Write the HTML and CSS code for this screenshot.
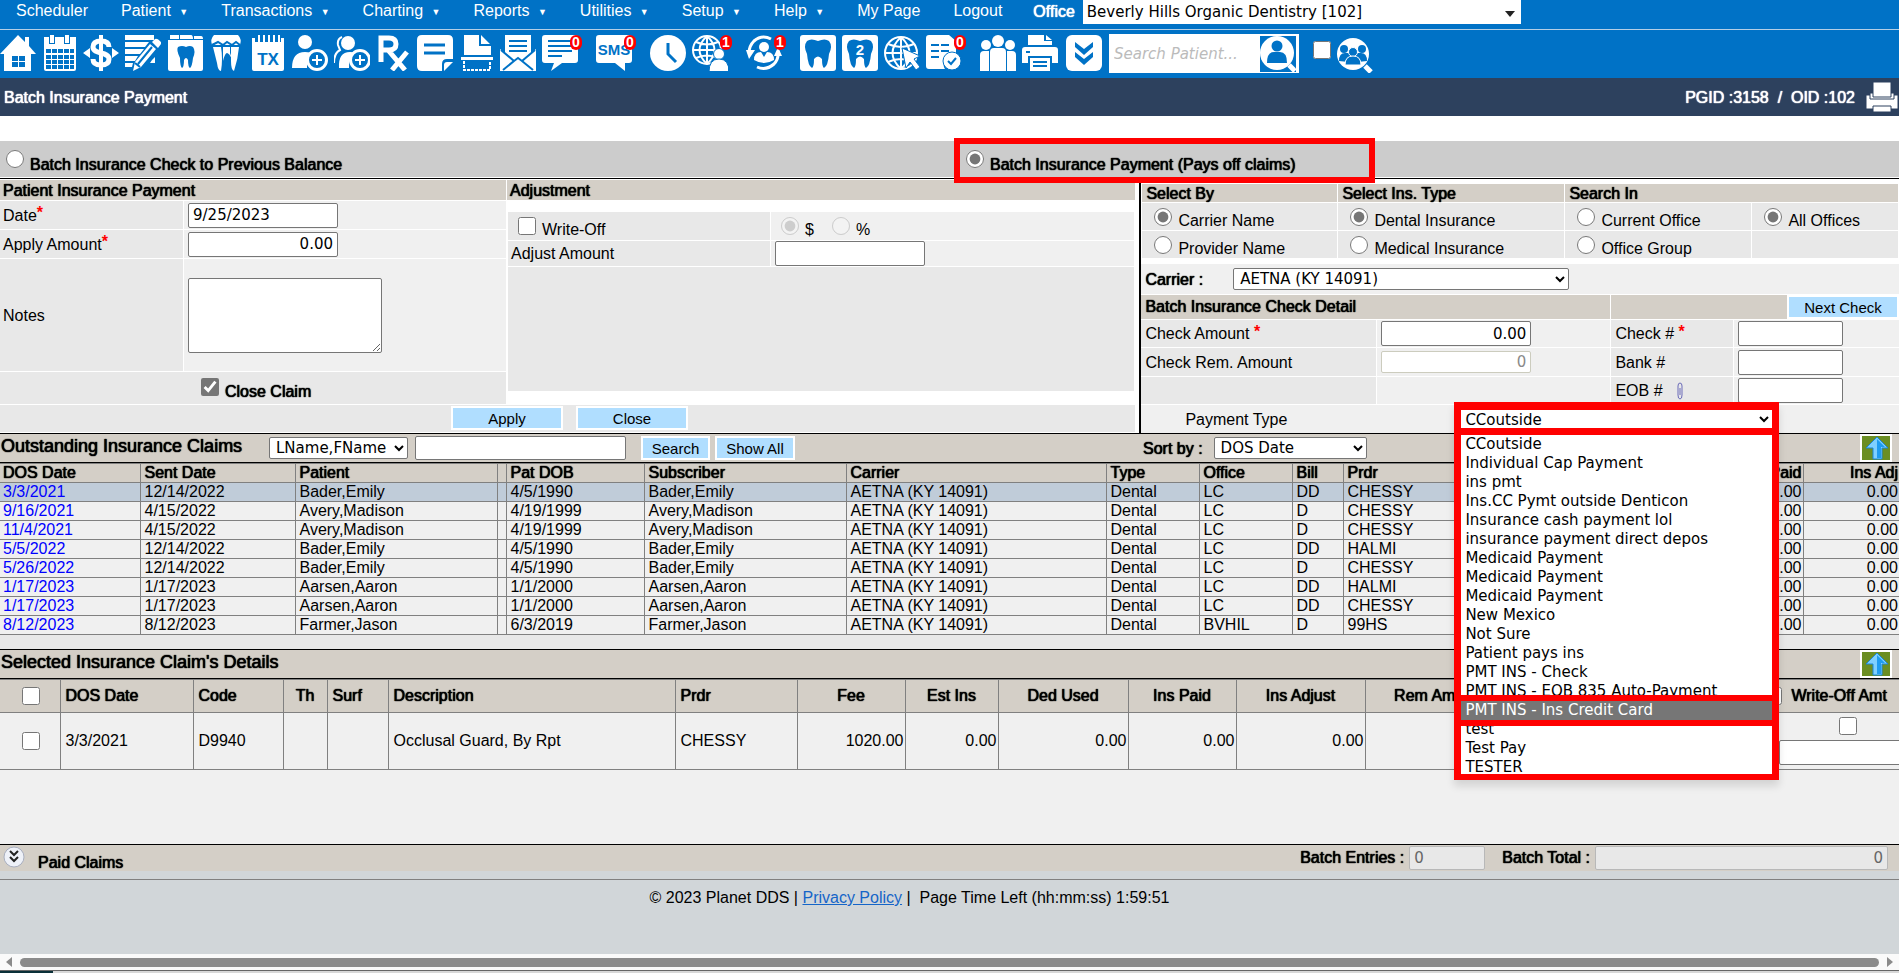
FILE: index.html
```html
<!DOCTYPE html>
<html lang="en">
<head>
  <meta charset="UTF-8" />
  <title>Batch Insurance Payment</title>
  <meta name="viewport" content="width=device-width, initial-scale=1.0"/>
  <link rel="stylesheet" href="styles.css">
</head>
<body>
  <header class="topbar">
    <nav class="menu">
      <a href="#">Scheduler</a>
      <a href="#">Patient <span class="caret">▼</span></a>
      <a href="#">Transactions <span class="caret">▼</span></a>
      <a href="#">Charting <span class="caret">▼</span></a>
      <a href="#">Reports <span class="caret">▼</span></a>
      <a href="#">Utilities <span class="caret">▼</span></a>
      <a href="#">Setup <span class="caret">▼</span></a>
      <a href="#">Help <span class="caret">▼</span></a>
      <a href="#">My Page</a>
      <a href="#">Logout</a>
      <div class="office">
        <label for="office" class="strong">Office</label>
        <div class="office-select">
          <select id="office"><option>Beverly Hills Organic Dentistry [102]</option></select>
        </div>
      </div>
    </nav>

    <div class="toolbar">
      <div class="tools tools-main">
        <a href="#" class="tool" aria-label="Home"><svg viewBox="0 0 36 36"><path d="M0 19L18 0l7 7V2h4v9l7 8h-5v17H4V19z"/><path class="b" d="M12 21h6v5h-6zM19 21h6v5h-6zM12 27h6v5h-6zM19 27h6v5h-6z"/></svg></a>
        <a href="#" class="tool" aria-label="Calendar"><svg viewBox="0 0 36 36"><path d="M2 2h5v7h6V2h9v7h6V2h6v10H2z"/><path d="M8 0h4v8H8zM23 0h4v8h-4z"/><path d="M2 12h32v22q0 2-2 2H4q-2 0-2-2z"/><path class="b" d="M4 14h5v4H4zM10 14h5v4h-5zM16 14h5v4h-5zM22 14h5v4h-5zM28 14h4v4h-4zM4 20h5v4H4zM10 20h5v4h-5zM16 20h5v4h-5zM22 20h5v4h-5zM28 20h4v4h-4zM4 25h5v4H4zM10 25h5v4h-5zM16 25h5v4h-5zM22 25h5v4h-5zM28 25h4v4h-4zM4 30h5v4H4zM10 30h5v4h-5zM16 30h5v4h-5zM22 30h5v4h-5zM28 30h4v4h-4z"/></svg></a>
        <a href="#" class="tool" aria-label="Payments"><svg viewBox="0 0 36 36"><path d="M0 18l7-5v10zM36 18l-7-5v10zM16 0h4v36h-4z"/><path class="l5" d="M26 12c0-4-3-6-8-6s-8 2-8 6 4 5 8 6 8 2 8 6-3 6-8 6-8-2-8-6"/></svg></a>
        <a href="#" class="tool" aria-label="Edit ledger"><svg viewBox="0 0 36 36"><path d="M0 0h29v5H0zM0 7h24l-4 5H0zM0 14h19l-4 5H0zM0 21h13l-3 5H0zM0 28h8l-1 4H0z"/><path d="M25 9l6 5L16 32l-8 4 2-9zM27 7l3-3q2-1 5 2 2 2 1 3l-3 4z"/><path class="bl" d="M27 12L13 29M10 28l5 4"/><path d="M27 25l3-3v6h-5z"/></svg></a>
        <a href="#" class="tool" aria-label="Tooth chart"><svg viewBox="0 0 36 36"><path d="M2 5h34v29q0 2-2 2H3q-2 0-2-2V5zM3 0h9v4H3zM13 0h11q2 0 2 4H13zM27 1h7q2 0 2 3h-9z"/><path class="b" d="M11 12q4-2 8 0 4-2 7 0 3 4 0 11-1 9-3 10-2-1-2-8-2-4-4 0 0 7-2 8-2-2-2-10-4-8-2-11z"/></svg></a>
        <a href="#" class="tool" aria-label="Perio"><svg viewBox="0 0 36 36"><path d="M6 0h24q4 4 2 10H4Q2 4 6 0z"/><path d="M5 12h8q2 12 0 24-3 0-4-8Q7 20 5 12zM15 12h7v6l2 6q-3-6-5-6t-4 8zM23 12h8q-1 12-5 24-3-1-3-10z"/><path class="bl" d="M4 10l6-3 5 3 4-3 5 3 4-3 4 3"/></svg></a>
        <a href="#" class="tool" aria-label="Treatment plan"><svg viewBox="0 0 36 36"><path d="M2 3h3v4h3V0h2v7h3V0h2v7h3V0h2v7h3V0h2v7h3V0h2v7h1V3h3v31q0 2-2 2H4q-2 0-2-2z"/><text class="bt" x="18" y="30" font-size="17" text-anchor="middle">TX</text></svg></a>
        <a href="#" class="tool" aria-label="Add patient"><svg viewBox="0 0 36 36"><circle cx="13" cy="7" r="7"/><path d="M0 33q0-16 13-16 6 0 8 2-7 4-6 14z"/><circle class="ring" cx="25" cy="25" r="9.500"/><path class="l2" d="M20 25h10M25 20v10"/></svg></a>
        <a href="#" class="tool" aria-label="Add family"><svg viewBox="0 0 36 36"><circle cx="14" cy="8" r="7"/><path d="M5 33q-1-16 11-16 4 0 6 1-8 5-7 15z"/><path class="l2" d="M8 2Q3 4 4 10l2 5Q0 18 0 28"/><circle class="ring" cx="26" cy="25" r="9.500"/><path class="l2" d="M21 25h10M26 20v10"/></svg></a>
        <a href="#" class="tool" aria-label="Prescriptions"><svg viewBox="0 0 36 36"><path class="l5" d="M6 27V3h8q7 0 7 6t-7 6H6M13 15l17 20M32 17L17 35"/></svg></a>
        <a href="#" class="tool" aria-label="Notes"><svg viewBox="0 0 36 36"><path d="M5 0h26q5 0 5 5v19h-6q-5 0-5 5v7H5q-5 0-5-5V5q0-5 5-5z"/><path d="M27 36v-6q0-3 3-3h6z"/><path class="bl3" d="M7 10h21M7 18h21"/></svg></a>
        <a href="#" class="tool" aria-label="Scan"><svg viewBox="0 0 36 36"><path d="M5 0h15v11h12v9H5zM22 0l9 9h-9zM2 22h32v3H2z"/><path class="dash" d="M5 26v9h26v-9"/></svg></a>
        <a href="#" class="tool" aria-label="Mail"><svg viewBox="0 0 36 36"><path d="M5 0h26v18l5-4v22H0V14l5 4z"/><path class="bl" d="M9 6h18M9 11h18M9 16h18M1 15l13 11L3 35M35 15L22 26l11 9M14 26l4-3 4 3"/></svg></a>
        <a href="#" class="tool" aria-label="Messages"><svg viewBox="0 0 36 36"><path d="M3 0h30q3 0 3 3v22q0 3-3 3H20L9 36l3-8H3q-3 0-3-3V3q0-3 3-3z"/><path class="bl" d="M6 6h24M6 11h24M6 16h24M6 21h14"/></svg><span class="badge">0</span></a>
      </div>
      <div class="tools">
        <a href="#" class="tool" aria-label="SMS"><svg viewBox="0 0 36 36"><path d="M3 0h30q3 0 3 3v22q0 3-3 3h-4v8l-10-8H3q-3 0-3-3V3q0-3 3-3z"/><text class="bt" x="18" y="20" font-size="15" text-anchor="middle">SMS</text></svg><span class="badge">0</span></a>
      </div>
      <div class="tools">
        <a href="#" class="tool" aria-label="Time clock"><svg viewBox="0 0 36 36"><circle cx="18" cy="18" r="18"/><path class="bl3" d="M18 8v11l8 8"/></svg></a>
        <a href="#" class="tool" aria-label="Portal users"><svg viewBox="0 0 36 36"><circle class="g" cx="15" cy="15" r="14"/><path class="g" d="M15 1v28M1 15h28M4 7q11 5 22 0M4 23q11-5 22 0M15 1q-15 14 0 28M15 1q15 14 0 28"/><circle class="edge" cx="27" cy="19" r="5.500"/><path class="edge" d="M17 37q0-13 10-13t10 13z"/></svg><span class="badge">1</span></a>
      </div>
      <div class="tools">
        <a href="#" class="tool" aria-label="Recall"><svg viewBox="0 0 36 36"><path class="l3" d="M25 4Q16-1 8 6q-5 5-5 12M11 32q9 4 17-3 5-5 4-13"/><path d="M0 15h9l-6 9zM28 21h8l-4-9z"/><circle cx="18" cy="12" r="5"/><path d="M8 25q0-8 7-8l3 5 3-5q7 0 7 8-10 6-20 0z"/></svg><span class="badge">1</span></a>
      </div>
      <div class="tools">
        <a href="#" class="tool" aria-label="Tooth"><svg viewBox="0 0 36 36"><rect width="36" height="36" rx="3"/><path class="b" d="M7 6q4-3 11 0 7-3 11 0 4 5 0 13-1 12-5 14-2-1-2-9-4-5-8 0 0 8-2 9-4-2-5-14-4-8 0-13z"/></svg></a>
        <a href="#" class="tool" aria-label="Tooth 2"><svg viewBox="0 0 36 36"><rect width="36" height="36" rx="3"/><path class="b" d="M7 6q4-3 11 0 7-3 11 0 4 5 0 13-1 12-5 14-2-1-2-9-4-5-8 0 0 8-2 9-4-2-5-14-4-8 0-13z"/><text class="wt" x="18" y="20" font-size="15" text-anchor="middle">2</text></svg></a>
        <a href="#" class="tool" aria-label="Web"><svg viewBox="0 0 36 36"><circle class="g" cx="17" cy="18" r="16"/><path class="g" d="M17 2v32M1 18h32M4 9q13 6 26 0M4 27q13-6 26 0M17 2q-17 16 0 32M17 2q17 16 0 32"/><path class="edge" d="M18 13l18 8-6 3 6 8-4 3-6-8-4 6z"/></svg></a>
        <a href="#" class="tool" aria-label="Claims"><svg viewBox="0 0 36 36"><path d="M3 0h20l7 6v13q-9-1-12 7-1 5 1 8H3q-3 0-3-3V3q0-3 3-3z"/><path class="bl" d="M5 10h8M15 10h8M5 16h8M15 16h8M5 22h8"/><circle class="edge" cx="26" cy="26" r="9"/><path class="bl" d="M22 26l3 3 5-6"/></svg><span class="badge">0</span></a>
      </div>
      <div class="tools">
        <a href="#" class="tool" aria-label="Patients"><svg viewBox="0 0 36 36"><circle cx="18" cy="6" r="6"/><circle cx="6" cy="10" r="5"/><circle cx="30" cy="10" r="5"/><path d="M10 36V17q0-4 4-4h8q4 0 4 4v19zM0 36V20q0-4 4-4h5v20zM36 36V20q0-4-4-4h-5v20z"/></svg></a>
        <a href="#" class="tool" aria-label="Print"><svg viewBox="0 0 36 36"><path d="M6 10V0h16v6h8v4zM24 0l6 5h-6zM3 12h30q3 0 3 3v13h-6v-7H6v7H0V15q0-3 3-3z"/><path d="M8 23h20v13H8z"/><path class="bl" d="M11 27h14M11 31h14"/><path class="b" d="M4 16h4v2H4z"/></svg></a>
      </div>
      <div class="search-row">
        <a href="#" class="tool" aria-label="More"><svg viewBox="0 0 36 36"><rect width="36" height="36" rx="6"/><path class="b" d="M9 7l9 7 9-7v5l-9 8-9-8zM9 17l9 7 9-7v5l-9 8-9-8z"/></svg></a>
        <div class="search">
          <input type="text" placeholder="Search Patient..." aria-label="Search Patient">
          <button type="button" class="search-btn" aria-label="Search"><svg viewBox="0 0 36 36"><circle cx="17" cy="17" r="17"/><circle class="b" cx="17" cy="10" r="5.500"/><path class="b" d="M7 27q0-11 7-11h6q7 0 7 11z"/><path class="l5" d="M29 29l6 6"/></svg></button>
        </div>
      </div>
      <div class="group-search">
        <input type="checkbox" class="box" aria-label="Search all offices">
        <a href="#" class="tool" aria-label="Search family"><svg viewBox="0 0 36 36"><circle cx="16" cy="17" r="16"/><path class="l5" d="M28 29l6 6"/><circle class="b" cx="7" cy="12" r="4"/><circle class="b" cx="25" cy="12" r="4"/><path class="b" d="M2 24q0-8 6-8h16q6 0 6 8-14 2-28 0z"/><circle class="wb" cx="16" cy="15" r="4.500"/><path class="wb" d="M8 28q0-9 8-9t8 9z"/></svg></a>
      </div>
    </div>
  </header>

  <div class="titlebar">
    <h1 class="strong">Batch Insurance Payment</h1>
    <span class="strong ids">PGID :3158&nbsp; /&nbsp; OID :102</span>
    <button type="button" class="print" aria-label="Print"><svg viewBox="0 0 34 32"><path d="M1 14h32v14H1z"/><path d="M5 12h24v6H5z"/><path d="M8 1h18v15H8zM8 25h18v6H8z"/></svg></button>
  </div>

  <main>
    <div class="modes">
      <label class="mode strong"><input type="radio" name="mode" class="box">Batch Insurance Check to Previous Balance</label>
      <label class="mode mode-marked strong"><input type="radio" name="mode" class="box" checked>Batch Insurance Payment (Pays off claims)</label>
    </div>

    <div class="entry">
      <section class="entry-left">
        <div class="payment">
          <h2 class="head strong">Patient Insurance Payment</h2>
          <label for="date" class="cell">Date<b class="req">*</b></label>
          <div class="cell light"><input type="text" id="date" class="field w150" value="9/25/2023"></div>
          <label for="apply" class="cell">Apply Amount<b class="req">*</b></label>
          <div class="cell light"><input type="text" id="apply" class="field w150 num" value="0.00"></div>
          <label for="notes" class="cell">Notes</label>
          <div class="cell light"><textarea id="notes" class="field notes"></textarea></div>
          <label class="cell close-claim strong"><input type="checkbox" class="box" checked>Close Claim</label>
        </div>
        <div class="adjust">
          <h2 class="head strong">Adjustment</h2>
          <div class="adjust-body">
            <label class="cell opt"><input type="checkbox" class="box">Write-Off</label>
            <div class="cell light opt">
              <label><input type="radio" name="unit" class="box" checked disabled>$</label>
              <label><input type="radio" name="unit" class="box" disabled>%</label>
            </div>
            <label for="adjamt" class="cell">Adjust Amount</label>
            <div class="cell light"><input type="text" id="adjamt" class="field w150"></div>
            <div class="cell filler"></div>
          </div>
        </div>
        <div class="actions">
          <button type="button" class="btn btn-wide">Apply</button>
          <button type="button" class="btn btn-wide">Close</button>
        </div>
      </section>

      <section class="entry-right">
        <div class="filters">
          <h2 class="head strong">Select By</h2>
          <h2 class="head strong">Select Ins. Type</h2>
          <h2 class="head strong span2">Search In</h2>
          <label class="cell opt"><input type="radio" name="by" class="box" checked>Carrier Name</label>
          <label class="cell opt"><input type="radio" name="type" class="box" checked>Dental Insurance</label>
          <label class="cell opt"><input type="radio" name="in" class="box">Current Office</label>
          <label class="cell opt"><input type="radio" name="in" class="box" checked>All Offices</label>
          <label class="cell opt"><input type="radio" name="by" class="box">Provider Name</label>
          <label class="cell opt"><input type="radio" name="type" class="box">Medical Insurance</label>
          <label class="cell opt"><input type="radio" name="in" class="box">Office Group</label>
          <div class="cell"></div>
        </div>
        <div class="carrier">
          <label for="carrier" class="strong">Carrier :</label>
          <select id="carrier" class="pick"><option>AETNA (KY 14091)</option></select>
        </div>
        <div class="detail">
          <h2 class="head strong span2">Batch Insurance Check Detail</h2>
          <div class="head next span2"><button type="button" class="btn btn-next">Next Check</button></div>
          <label for="chkamt" class="cell">Check Amount <b class="req">*</b></label>
          <div class="cell light"><input type="text" id="chkamt" class="field w150 num" value="0.00"></div>
          <label for="chkno" class="cell">Check # <b class="req">*</b></label>
          <div class="cell light"><input type="text" id="chkno" class="field w105"></div>
          <label for="rem" class="cell">Check Rem. Amount</label>
          <div class="cell light"><input type="text" id="rem" class="field w150 num off" value="0" disabled></div>
          <label for="bank" class="cell">Bank #</label>
          <div class="cell light"><input type="text" id="bank" class="field w105"></div>
          <div class="cell"></div>
          <div class="cell light"></div>
          <label for="eob" class="cell">EOB # <svg class="clip" viewBox="0 0 8 18"><path d="M2 4v9q0 4 2 4t2-4V4q0-3-2-3T2 4m2 2v7"/></svg></label>
          <div class="cell light"><input type="text" id="eob" class="field w105"></div>
        </div>
        <div class="paytype">
          <label for="ptype">Payment Type</label>
          <div class="pay-anchor">
            <div class="pay-menu">
              <select id="ptype"><option>CCoutside</option></select>
              <ul class="pay-list">
                <li>CCoutside</li>
                <li>Individual Cap Payment</li>
                <li>ins pmt</li>
                <li>Ins.CC Pymt outside Denticon</li>
                <li>Insurance cash payment lol</li>
                <li>insurance payment direct depos</li>
                <li>Medicaid Payment</li>
                <li>Medicaid Payment</li>
                <li>Medicaid Payment</li>
                <li>New Mexico</li>
                <li>Not Sure</li>
                <li>Patient pays ins</li>
                <li>PMT INS - Check</li>
                <li>PMT INS - EOB 835 Auto-Payment</li>
                <li class="active">PMT INS - Ins Credit Card</li>
                <li>test</li>
                <li>Test Pay</li>
                <li>TESTER</li>
              </ul>
            </div>
          </div>
        </div>
      </section>
    </div>

    <section class="claims">
      <div class="bar">
        <h2 class="strong bar-title">Outstanding Insurance Claims</h2>
        <select class="pick name-pick" aria-label="Search field"><option>LName,FName</option></select>
        <input type="text" class="field name-field" aria-label="Search text">
        <button type="button" class="btn btn-search">Search</button>
        <button type="button" class="btn btn-show">Show All</button>
        <div class="sort">
          <label for="sort" class="strong">Sort by :</label>
          <select id="sort" class="pick sort-pick"><option>DOS Date</option></select>
        </div>
        <button type="button" class="up" aria-label="Collapse"><svg viewBox="0 0 28 24"><use href="#up"/></svg></button>
      </div>
      <table class="grid">
        <colgroup>
          <col class="c140"><col class="c155"><col class="c202"><col class="c9"><col class="c138"><col class="c202"><col class="c260"><col class="c93"><col class="c93"><col class="c51"><col><col class="c104"><col class="c96">
        </colgroup>
        <thead>
          <tr><th>DOS Date</th><th>Sent Date</th><th>Patient</th><th></th><th>Pat DOB</th><th>Subscriber</th><th>Carrier</th><th>Type</th><th>Office</th><th>Bill</th><th>Prdr</th><th class="r">Ins Paid</th><th class="r">Ins Adj</th></tr>
        </thead>
        <tbody>
          <tr class="picked"><td><a href="#">3/3/2021</a></td><td>12/14/2022</td><td>Bader,Emily</td><td></td><td>4/5/1990</td><td>Bader,Emily</td><td>AETNA (KY 14091)</td><td>Dental</td><td>LC</td><td>DD</td><td>CHESSY</td><td class="r">0.00</td><td class="r">0.00</td></tr>
          <tr><td><a href="#">9/16/2021</a></td><td>4/15/2022</td><td>Avery,Madison</td><td></td><td>4/19/1999</td><td>Avery,Madison</td><td>AETNA (KY 14091)</td><td>Dental</td><td>LC</td><td>D</td><td>CHESSY</td><td class="r">0.00</td><td class="r">0.00</td></tr>
          <tr><td><a href="#">11/4/2021</a></td><td>4/15/2022</td><td>Avery,Madison</td><td></td><td>4/19/1999</td><td>Avery,Madison</td><td>AETNA (KY 14091)</td><td>Dental</td><td>LC</td><td>D</td><td>CHESSY</td><td class="r">0.00</td><td class="r">0.00</td></tr>
          <tr><td><a href="#">5/5/2022</a></td><td>12/14/2022</td><td>Bader,Emily</td><td></td><td>4/5/1990</td><td>Bader,Emily</td><td>AETNA (KY 14091)</td><td>Dental</td><td>LC</td><td>DD</td><td>HALMI</td><td class="r">0.00</td><td class="r">0.00</td></tr>
          <tr><td><a href="#">5/26/2022</a></td><td>12/14/2022</td><td>Bader,Emily</td><td></td><td>4/5/1990</td><td>Bader,Emily</td><td>AETNA (KY 14091)</td><td>Dental</td><td>LC</td><td>D</td><td>CHESSY</td><td class="r">0.00</td><td class="r">0.00</td></tr>
          <tr><td><a href="#">1/17/2023</a></td><td>1/17/2023</td><td>Aarsen,Aaron</td><td></td><td>1/1/2000</td><td>Aarsen,Aaron</td><td>AETNA (KY 14091)</td><td>Dental</td><td>LC</td><td>DD</td><td>HALMI</td><td class="r">0.00</td><td class="r">0.00</td></tr>
          <tr><td><a href="#">1/17/2023</a></td><td>1/17/2023</td><td>Aarsen,Aaron</td><td></td><td>1/1/2000</td><td>Aarsen,Aaron</td><td>AETNA (KY 14091)</td><td>Dental</td><td>LC</td><td>DD</td><td>CHESSY</td><td class="r">0.00</td><td class="r">0.00</td></tr>
          <tr><td><a href="#">8/12/2023</a></td><td>8/12/2023</td><td>Farmer,Jason</td><td></td><td>6/3/2019</td><td>Farmer,Jason</td><td>AETNA (KY 14091)</td><td>Dental</td><td>BVHIL</td><td>D</td><td>99HS</td><td class="r">0.00</td><td class="r">0.00</td></tr>
        </tbody>
      </table>
    </section>

    <section class="selected">
      <div class="bar">
        <h2 class="strong bar-title">Selected Insurance Claim's Details</h2>
        <button type="button" class="up" aria-label="Collapse"><svg viewBox="0 0 28 24"><g id="up"><path fill="#7fd0ff" stroke="#1b86d8" d="M15 1l11 11h-6v11h-9V12H4z"/><path fill="#1f9cf0" d="M15 3l8 8h-4v11h-4z"/></g></svg></button>
      </div>
      <table class="grid lines">
        <colgroup>
          <col class="c60"><col class="c133"><col class="c90"><col class="c44"><col class="c61"><col class="c287"><col class="c122"><col class="c108"><col class="c93"><col class="c130"><col class="c108"><col class="c129"><col class="c124"><col><col class="c178">
        </colgroup>
        <thead>
          <tr><th class="c"><input type="checkbox" class="box" aria-label="Select all"></th><th>DOS Date</th><th>Code</th><th class="c">Th</th><th>Surf</th><th>Description</th><th>Prdr</th><th class="c">Fee</th><th class="c">Est Ins</th><th class="c">Ded Used</th><th class="c">Ins Paid</th><th class="c">Ins Adjust</th><th class="c">Rem Amt</th><th></th><th><label class="wo"><input type="checkbox" class="box">Write-Off Amt</label></th></tr>
        </thead>
        <tbody>
          <tr><td class="c"><input type="checkbox" class="box" aria-label="Select claim"></td><td>3/3/2021</td><td>D9940</td><td></td><td></td><td>Occlusal Guard, By Rpt</td><td>CHESSY</td><td class="r">1020.00</td><td class="r">0.00</td><td class="r">0.00</td><td class="r">0.00</td><td class="r">0.00</td><td></td><td></td><td class="c wo-cell"><input type="checkbox" class="box" aria-label="Write off"><input type="text" class="field" aria-label="Write-off amount"></td></tr>
        </tbody>
      </table>
    </section>

    <section class="paid">
      <button type="button" class="expand" aria-label="Expand"><svg viewBox="0 0 22 22"><circle cx="11" cy="11" r="10" fill="#eef1f8" stroke="#a9afc0"/><path fill="none" stroke="#222" stroke-width="2" d="M7 5l4 4 4-4M7 11l4 4 4-4"/></svg></button>
      <span class="strong paid-title">Paid Claims</span>
      <label class="strong" for="entries">Batch Entries :</label>
      <input type="text" id="entries" class="field entries" value="0" disabled>
      <label class="strong total-label" for="total">Batch Total :</label>
      <input type="text" id="total" class="field num total" value="0" disabled>
    </section>
  </main>

  <footer class="foot">© 2023 Planet DDS | <a href="#">Privacy Policy</a> |&nbsp; Page Time Left (hh:mm:ss) 1:59:51</footer>

  <div class="scroll">
    <svg class="tip" viewBox="0 0 6 10"><path d="M6 0v10L0 5z"/></svg>
    <div class="thumb"></div>
    <svg class="tip" viewBox="0 0 6 10"><path d="M0 0v10l6-5z"/></svg>
  </div>
  <div class="edge-strip"></div>
</body>
</html>
```
FILE: styles.css
```css
* {
  box-sizing: border-box;
}
body {
  margin: 0;
  min-height: 100vh;
  display: flex;
  flex-direction: column;
  overflow: hidden;
  background: #fff;
  color: #000;
  font-family: "Liberation Sans", Arial, sans-serif;
  font-size: 16px;
  line-height: 19px;
}
h1, h2 {
  margin: 0;
  font-size: 16px;
  font-weight: normal;
}
input, select, textarea, button {
  margin: 0;
  font-family: "DejaVu Sans", Verdana, sans-serif;
  font-size: 15px;
}
.strong, th {
  font-weight: normal;
  text-shadow: 0 0 1px currentColor, 0 0 1px currentColor;
}
.box {
  flex: none;
  width: 18px;
  height: 18px;
  accent-color: #767676;
}

/* Top menu */
.topbar {
  background: #0072c6;
  color: #fff;
}
.menu {
  display: flex;
  gap: 33px;
  height: 30px;
  padding-left: 16px;
  border-bottom: 1px solid #b4cfe6;
  line-height: 21px;
}
.menu > a {
  color: #fff;
  text-decoration: none;
  white-space: nowrap;
}
.caret {
  margin-left: 4px;
  font-size: 9px;
  vertical-align: 1px;
}
.office {
  display: flex;
  gap: 8px;
  margin-left: -2px;
  line-height: 23px;
}
.office-select {
  position: relative;
  width: 438px;
}
.office-select select {
  appearance: none;
  width: 100%;
  height: 24px;
  padding: 0 4px;
  border: 0;
  background: #fff;
}
.office-select::after {
  content: "";
  position: absolute;
  top: 11px;
  right: 6px;
  border: 5px solid transparent;
  border-top: 6px solid #222;
  border-bottom: 0;
}

/* Icon toolbar */
.toolbar {
  display: flex;
  gap: 18px;
  height: 48px;
  padding-top: 5px;
}
.tools {
  display: flex;
  gap: 6px;
}
.tools-main {
  gap: 0;
  width: 578px;
  justify-content: space-between;
}
.tool {
  position: relative;
  display: block;
  width: 36px;
  height: 36px;
}
.tool svg, .search-btn svg {
  display: block;
  width: 36px;
  height: 36px;
  fill: #fff;
}
svg .b {
  fill: #0072c6;
}
svg .wb {
  fill: #0072c6;
  stroke: #fff;
}
svg .bl, svg .bl3 {
  fill: none;
  stroke: #0072c6;
  stroke-width: 2;
}
svg .bl3 {
  stroke-width: 3;
}
svg .l2, svg .l3, svg .l5, svg .g, svg .dash {
  fill: none;
  stroke: #fff;
  stroke-width: 2;
}
svg .l3 {
  stroke-width: 3;
}
svg .l5 {
  stroke-width: 5;
}
svg .dash {
  stroke-dasharray: 3 1;
}
svg .ring {
  fill: #0072c6;
  stroke: #fff;
  stroke-width: 3;
}
svg .edge {
  fill: #fff;
  stroke: #0072c6;
  stroke-width: 1;
}
svg .bt, svg .wt {
  fill: #0072c6;
  font-weight: bold;
}
svg .wt {
  fill: #fff;
}
.badge {
  position: absolute;
  top: 0;
  right: -4px;
  width: 12px;
  height: 15px;
  border-radius: 6px;
  background: #f00;
  color: #fff;
  font-size: 14px;
  font-weight: bold;
  line-height: 15px;
  text-align: center;
}
.search-row {
  display: flex;
  gap: 7px;
  margin-left: -10px;
}
.search {
  display: flex;
  align-items: center;
  width: 190px;
  height: 39px;
  margin-top: -1px;
  padding-right: 3px;
  background: #fff;
}
.search input {
  flex: 1;
  min-width: 0;
  padding: 0 5px;
  border: 0;
  outline: 0;
}
.search input::placeholder {
  color: #bbb;
  font-style: italic;
}
.search-btn {
  padding: 0;
  border: 0;
  background: #0072c6;
}
.group-search {
  display: flex;
  gap: 6px;
  margin-left: -4px;
  padding-top: 2px;
}
.group-search .box {
  margin-top: 4px;
}

/* Page title */
.titlebar {
  display: flex;
  align-items: center;
  height: 38px;
  padding-left: 4px;
  background: #2d415e;
  color: #fff;
}
.ids {
  margin-left: auto;
  margin-right: 10px;
}
.print {
  width: 34px;
  height: 32px;
  padding: 0;
  border: 0;
  background: none;
}
.print svg {
  display: block;
  fill: #fff;
  stroke: #2d415e;
}

/* Payment mode */
.modes {
  display: grid;
  grid-template-columns: 954fr 945fr;
  height: 36px;
  margin-top: 25px;
  background: #ccc;
}
.mode {
  display: flex;
  gap: 6px;
  padding: 9px 0 0 6px;
  line-height: 29px;
}
.mode-marked {
  width: 421px;
  height: 45px;
  margin-top: -3px;
  padding: 6px 0 0 6px;
  border: 6px solid #f00;
  position: relative;
}

/* Entry forms */
.entry {
  display: grid;
  grid-template-columns: 3fr 2fr;
  margin-top: 1px;
  border-top: 1px solid #000;
  border-bottom: 1px solid #000;
}
.head {
  padding-left: 3px;
  background: #d4cfc7;
}
.cell {
  display: flex;
  align-items: center;
  padding-left: 3px;
  background: #e8e8e8;
  white-space: pre;
}
.light {
  padding-left: 4px;
  background: #f0f0f0;
}
.req {
  color: #f00;
  align-self: flex-start;
  padding-top: 2px;
}
.field {
  height: 25px;
  padding: 2px 4px;
  border: 1px solid #767676;
  border-radius: 2px;
  background: #fff;
}
.num {
  text-align: right;
}
.w150 {
  width: 150px;
}
.w105 {
  width: 105px;
}
.off {
  height: 22px;
  border-color: #ccccbe;
  color: #8a8a8a;
}
.opt {
  align-items: flex-start;
  gap: 6px;
  padding: 5px 0 0 12px;
  line-height: 26px;
}
.opt label {
  display: flex;
  gap: 6px;
  margin-right: 12px;
}
.entry-left {
  display: grid;
  grid-template-columns: 506px 1fr;
  gap: 1px;
  padding: 1px 4px 1px 0;
}
.payment {
  display: grid;
  grid-template-columns: 183px 1fr;
  grid-template-rows: 20px 28px 28px 112px 32px;
  gap: 1px;
}
.payment .head, .adjust .head {
  line-height: 21px;
}
.payment .head, .close-claim {
  grid-column: 1 / -1;
}
.notes {
  width: 194px;
  height: 75px;
}
.close-claim {
  align-items: flex-start;
  gap: 6px;
  padding: 6px 0 0 201px;
  line-height: 28px;
}
.adjust-body {
  display: grid;
  grid-template-columns: 262px 1fr;
  grid-template-rows: 28px 25px 124px;
  gap: 1px;
  margin: 12px 1px 0;
}
.filler {
  grid-column: 1 / -1;
}
.adjust .head {
  height: 20px;
}
.adjust .opt {
  padding-left: 10px;
}
.actions {
  grid-column: 1 / -1;
  display: flex;
  gap: 13px;
  height: 27px;
  padding: 1px 0 0 451px;
  background: #e8e8e8;
}
.btn {
  height: 24px;
  padding: 0;
  border: 2px solid #fff;
  background: #b0deff;
  font-family: inherit;
}
.btn-wide {
  width: 112px;
}
.entry-right {
  border-left: 2px solid #000;
}
.filters {
  display: grid;
  grid-template-columns: 195px 226px 186px 1fr;
  grid-template-rows: 18px 27px 27px;
  gap: 1px;
  padding: 5px 1px 6px;
}
.span2 {
  grid-column: span 2;
}
.filters .head, .detail .head {
  padding-left: 4px;
}
.carrier {
  display: flex;
  align-items: center;
  gap: 30px;
  height: 30px;
  padding-left: 4px;
  background: #f0f0f0;
}
.pick {
  height: 22px;
  padding: 0 0 0 2px;
  border: 1px solid #767676;
  border-radius: 2px;
  background: #fff;
}
.carrier .pick {
  width: 336px;
}
.detail {
  display: grid;
  grid-template-columns: 235px 233px 122px 1fr;
  grid-template-rows: 24px 27px 28px 27px;
  gap: 1px;
  margin-top: 1px;
}
.detail .head {
  line-height: 24px;
}
.detail .cell {
  padding-left: 4px;
}
.next {
  display: flex;
  justify-content: flex-end;
}
.btn-next {
  width: 112px;
}
.clip {
  width: 8px;
  height: 18px;
  margin-left: 9px;
  fill: none;
  stroke: #6a6ab8;
}
.paytype {
  display: flex;
  align-items: center;
  height: 28px;
  margin-top: 1px;
  padding-left: 44px;
  background: #f0f0f0;
}
.paytype > label {
  width: 269px;
}

/* Open payment type list */
.pay-anchor {
  position: relative;
  align-self: stretch;
}
.pay-menu {
  position: absolute;
  z-index: 2;
  top: -3px;
  left: 0;
  width: 325px;
  padding: 8px 7px 6px;
  background: #f00;
  box-shadow: 0 6px 8px rgba(0,0,0,0.12);
}
.pay-menu select {
  display: block;
  width: 100%;
  height: 18px;
  padding: 0;
  border: 0;
  background: #fff;
}
.pay-list {
  height: 339px;
  margin: 7px 0 0;
  padding: 0;
  overflow: hidden;
  background: #fff;
  font-family: "DejaVu Sans", Verdana, sans-serif;
  font-size: 15px;
  list-style: none;
}
.pay-list li {
  padding-left: 4px;
  white-space: nowrap;
}
.pay-list .active {
  position: relative;
  background: #767676;
  color: #fff;
  box-shadow: 0 0 0 6px #f00;
}

/* Section bars */
.bar {
  display: flex;
  align-items: center;
  height: 29px;
  padding: 0 7px 0 1px;
  border-bottom: 1px solid #000;
  background: #d4cfc7;
}
.bar-title {
  width: 268px;
  padding-bottom: 4px;
  font-size: 18px;
  white-space: nowrap;
}
.name-pick {
  width: 139px;
  margin-right: 7px;
}
.name-field {
  width: 211px;
  height: 24px;
  margin-right: 15px;
}
.btn-search {
  width: 69px;
  margin-right: 5px;
}
.btn-show {
  width: 80px;
}
.sort {
  display: flex;
  align-items: center;
  gap: 11px;
  margin-left: 348px;
}
.sort-pick {
  width: 153px;
}
.up {
  width: 32px;
  height: 28px;
  margin-left: auto;
  padding: 0;
  border: 2px solid #fff;
  background: #6b8e23;
}
.up svg {
  display: block;
}

/* Claim tables */
.claims {
  padding-bottom: 14px;
  background: #e8e8e8;
}
.grid {
  width: 100%;
  table-layout: fixed;
  border-collapse: collapse;
  background: #f0f0f0;
}
.grid th, .grid td {
  height: 19px;
  padding: 0 0 0 4px;
  border: 1px solid #808080;
  line-height: 18px;
  text-align: left;
  white-space: nowrap;
  overflow: hidden;
}
.grid tr > :first-child {
  border-left: 0;
  padding-left: 3px;
}
.grid tr > :last-child {
  border-right: 0;
}
.grid th {
  background: #d4cfc7;
}
.grid .r {
  padding: 0 1px 0 0;
  text-align: right;
}
.grid .c {
  padding: 0;
  text-align: center;
}
.grid td a {
  color: #00f;
  text-decoration: none;
}
.picked {
  background: #c0ccd9;
}
.c9 { width: 9px; }
.c44 { width: 44px; }
.c51 { width: 51px; }
.c60 { width: 60px; }
.c61 { width: 61px; }
.c90 { width: 90px; }
.c93 { width: 93px; }
.c96 { width: 96px; }
.c104 { width: 104px; }
.c108 { width: 108px; }
.c122 { width: 122px; }
.c124 { width: 124px; }
.c129 { width: 129px; }
.c130 { width: 130px; }
.c133 { width: 133px; }
.c138 { width: 138px; }
.c140 { width: 140px; }
.c155 { width: 155px; }
.c178 { width: 178px; }
.c202 { width: 202px; }
.c260 { width: 260px; }
.c287 { width: 287px; }
.selected {
  min-height: 196px;
  border-top: 1px solid #000;
  border-bottom: 1px solid #000;
  background: #f0f0f0;
  overflow: hidden;
}
.lines {
  width: 102%;
}
.lines .box {
  vertical-align: middle;
}
.lines th {
  height: 33px;
}
.lines td {
  height: 57px;
}
.lines th, .lines td {
  padding-left: 5px;
}
.wo {
  display: flex;
  gap: 9px;
}
.wo-cell .box {
  display: block;
  margin: 0 auto 5px;
}
.wo-cell .field {
  width: 138px;
}

/* Totals */
.paid {
  display: flex;
  height: 26px;
  padding: 1px 11px 0 3px;
  background: #d4cfc7;
  line-height: 23px;
}
.expand {
  width: 22px;
  height: 22px;
  padding: 0;
  border: 0;
  background: none;
}
.expand svg {
  display: block;
}
.paid-title {
  margin: 0 auto 0 13px;
  line-height: 34px;
}
.paid .field {
  height: 24px;
  margin-left: 5px;
  border-color: #b8b8b8;
  background: #e8e8e8;
  color: #666;
}
.entries {
  width: 76px;
}
.total-label {
  margin-left: 17px;
}
.total {
  width: 293px;
}

/* Footer */
.foot {
  flex: 1;
  margin-top: 8px;
  padding: 8px 80px 0 0;
  border-top: 1px solid #808080;
  background: #d1d6d9;
  box-shadow: 0 -8px #d1d6d9;
  text-align: center;
}
.foot a {
  color: #1565c8;
}

/* Horizontal scroll bar */
.scroll {
  display: flex;
  align-items: center;
  gap: 8px;
  height: 16px;
  padding: 0 6px;
  background: #fafafa;
}
.thumb {
  flex: 1;
  height: 9px;
  border-radius: 5px;
  background: #8b8b8b;
}
.tip {
  width: 6px;
  height: 10px;
  fill: #8b8b8b;
}
.edge-strip {
  height: 3px;
  border-top: 1px solid #666;
  background: linear-gradient(to right, #0a3038 53px, #d8d8d8 53px);
}
```
